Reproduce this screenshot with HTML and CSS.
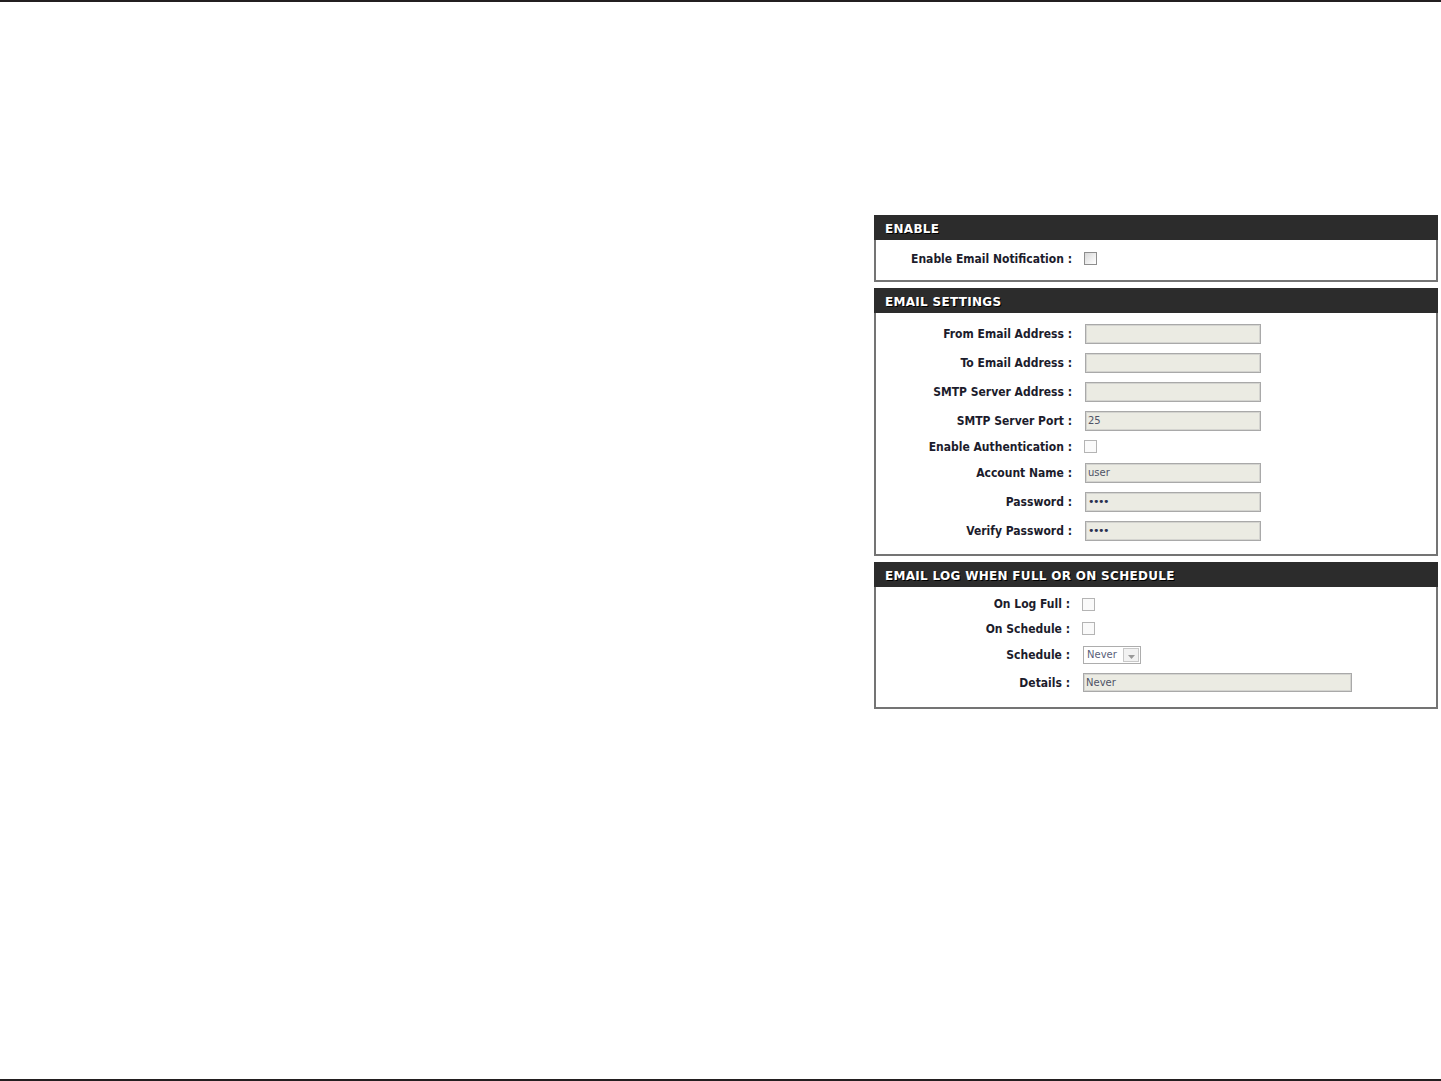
FILE: index.html
```html
<!DOCTYPE html>
<html>
<head>
<meta charset="utf-8">
<link rel="stylesheet" href="styles.css">
</head>
<body>
<div class="page">
  <div class="rule"></div>
  <main class="main">
    <div class="panels">
      <section class="panel">
        <h2 class="panel-head">ENABLE</h2>
        <div class="panel-body body-enable">
          <div class="row r25">
            <span class="label">Enable Email Notification :</span>
            <span class="check check-grad"></span>
          </div>
        </div>
      </section>

      <section class="panel">
        <h2 class="panel-head">EMAIL SETTINGS</h2>
        <div class="panel-body body-settings">
          <div class="row r29"><span class="label">From Email Address :</span><span class="field"></span></div>
          <div class="row r29"><span class="label">To Email Address :</span><span class="field"></span></div>
          <div class="row r29"><span class="label">SMTP Server Address :</span><span class="field"></span></div>
          <div class="row r29"><span class="label">SMTP Server Port :</span><span class="field">25</span></div>
          <div class="row r23"><span class="label">Enable Authentication :</span><span class="check"></span></div>
          <div class="row r29"><span class="label">Account Name :</span><span class="field">user</span></div>
          <div class="row r29"><span class="label">Password :</span><span class="field dots">&bull;&bull;&bull;&bull;</span></div>
          <div class="row r29"><span class="label">Verify Password :</span><span class="field dots">&bull;&bull;&bull;&bull;</span></div>
        </div>
      </section>

      <section class="panel">
        <h2 class="panel-head">EMAIL LOG WHEN FULL OR ON SCHEDULE</h2>
        <div class="panel-body body-log">
          <div class="row r24 narrow"><span class="label">On Log Full :</span><span class="check"></span></div>
          <div class="row r25 narrow"><span class="label">On Schedule :</span><span class="check"></span></div>
          <div class="row r28 narrow"><span class="label">Schedule :</span>
            <span class="select"><span class="select-val">Never</span><span class="select-btn"><svg width="7" height="4" viewBox="0 0 7 4"><path d="M0 0H7L3.5 4Z" fill="#9a9a9a"/></svg></span></span>
          </div>
          <div class="row r27 narrow"><span class="label">Details :</span><span class="field wide">Never</span></div>
        </div>
      </section>
    </div>
  </main>
  <div class="rule"></div>
</div>
</body>
</html>
```

FILE: styles.css
```css
html, body {
  margin: 0;
  padding: 0;
  background: #ffffff;
}

.page {
  display: flex;
  flex-direction: column;
  height: 1081px;
}

.rule {
  height: 2px;
  background: #231f20;
  flex: none;
}

.main {
  flex: 1;
  padding: 213px 0 0 874px;
}

.panels {
  width: 564px;
  display: flex;
  flex-direction: column;
  gap: 6px;
}

.panel {
  display: flex;
  flex-direction: column;
}

.panel-head {
  margin: 0;
  height: 25px;
  line-height: 28px;
  background: #2c2c2c;
  color: #ffffff;
  font-family: "DejaVu Sans", Verdana, sans-serif;
  font-weight: bold;
  font-size: 12px;
  letter-spacing: 0.3px;
  padding-left: 11px;
  text-shadow: 1px 1px 0 #000;
}

.panel-body {
  border: 2px solid #747474;
  border-top: none;
}

.body-enable {
  padding: 6px 0 9px 0;
}

.body-settings {
  padding: 6px 0 9px 0;
}

.body-log {
  padding: 5px 0 11px 0;
}

.row {
  display: flex;
  align-items: center;
  gap: 12px;
}

.r23 { height: 23px; }
.r24 { height: 24px; }
.r25 { height: 25px; }
.r27 { height: 27px; }
.r28 { height: 28px; }
.r29 { height: 29px; }

.label {
  width: 196px;
  text-align: right;
  font-family: "DejaVu Sans Condensed", "DejaVu Sans", Tahoma, sans-serif;
  font-weight: bold;
  font-size: 12px;
  color: #1c1c2c;
  white-space: nowrap;
}

.narrow .label {
  width: 194px;
}

.check {
  width: 11px;
  height: 11px;
  border: 1px solid #b4b4b4;
  background: #fafafa;
  flex: none;
}

.check-grad {
  border-color: #8e8e8e;
  background: linear-gradient(135deg, #d8d8d8 0%, #f4f4f4 70%, #ffffff 100%);
}

.field {
  box-sizing: border-box;
  width: 176px;
  height: 20px;
  margin-left: 1px;
  border: 1px solid #a9a9a9;
  box-shadow: inset 0 0 0 1px #d4d4d0;
  background: #ebebe3;
  font-family: "DejaVu Sans", Tahoma, sans-serif;
  font-size: 10px;
  color: #4e5366;
  line-height: 18px;
  padding-left: 2px;
  flex: none;
}

.field.wide {
  width: 269px;
  height: 19px;
  line-height: 17px;
}

.dots {
  font-size: 11px;
  letter-spacing: -1.5px;
  color: #2c3050;
}

.select {
  box-sizing: border-box;
  display: flex;
  width: 58px;
  height: 18px;
  margin-left: 1px;
  border: 1px solid #adadad;
  background: #ffffff;
  flex: none;
}

.select-val {
  flex: 1;
  font-family: "DejaVu Sans", Tahoma, sans-serif;
  font-size: 10px;
  color: #5a5f7a;
  line-height: 16px;
  padding-left: 3px;
}

.select-btn {
  box-sizing: border-box;
  width: 16px;
  height: 14px;
  margin: 1px 1px 0 0;
  border: 1px solid #c8c8c8;
  background: #f2f2f2;
  display: flex;
  align-items: center;
  justify-content: center;
  padding-top: 3px;
}
```
